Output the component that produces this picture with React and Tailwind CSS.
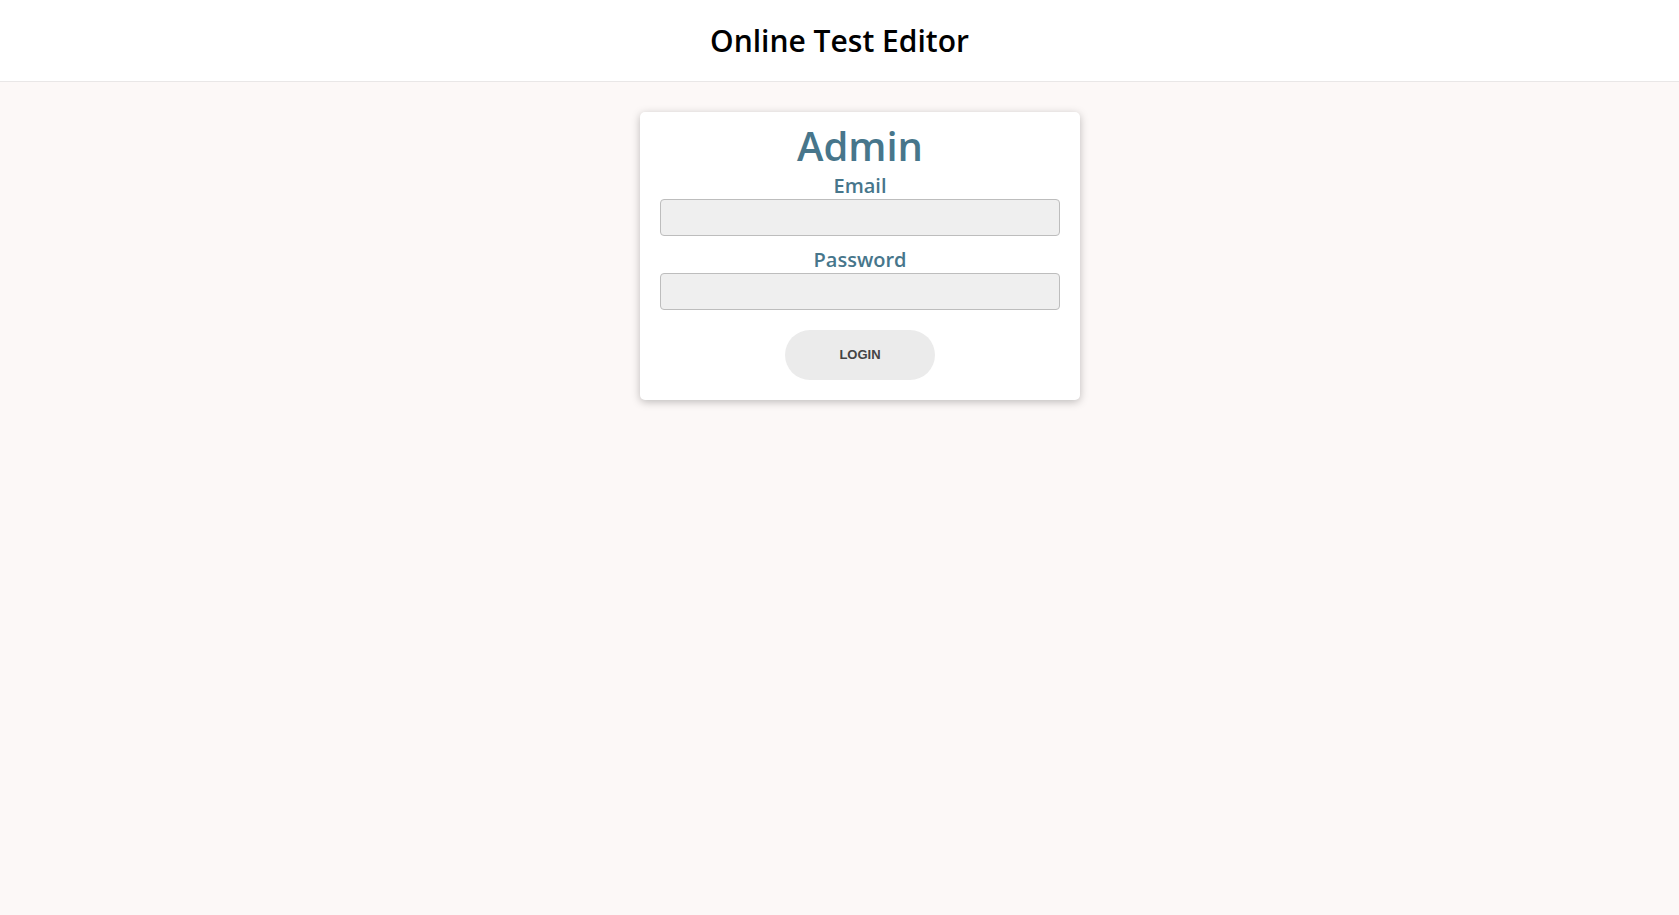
export default function App() {
  return (
    <div className="min-h-[915px] bg-[#fcf8f7] font-['Open_Sans',sans-serif]">
      <header className="h-[82px] bg-white border-b border-[#e9e7e7] flex items-center justify-center">
        <h1 className="text-[30px] leading-[40px] font-semibold text-black mt-[1px]">Online Test Editor</h1>
      </header>
      <main className="flex justify-center pt-[30px] pl-[41px]">
        <div className="w-[440px] bg-white rounded-[5px] shadow-[0_2px_8px_rgba(0,0,0,0.25)] px-[20px] pt-[10px] pb-[20px] flex flex-col items-center text-[#47768b]">
          <div className="text-[40px] leading-[48px] font-semibold">Admin</div>
          <label className="mt-[4px] text-[20px] leading-[24px] font-semibold">Email</label>
          <input type="email" className="mt-[1px] w-[400px] h-[37px] bg-[#efefef] border border-[#bdbdbd] rounded-[4px] outline-none px-2" />
          <label className="mt-[12px] text-[20px] leading-[24px] font-semibold">Password</label>
          <input type="password" className="mt-[1px] w-[400px] h-[37px] bg-[#efefef] border border-[#bdbdbd] rounded-[4px] outline-none px-2" />
          <button className="mt-[20px] w-[150px] h-[50px] rounded-full bg-[#ebebeb] text-[#444] text-[13px] font-bold font-['Liberation_Sans',Arial,sans-serif]">LOGIN</button>
        </div>
      </main>
    </div>
  );
}
